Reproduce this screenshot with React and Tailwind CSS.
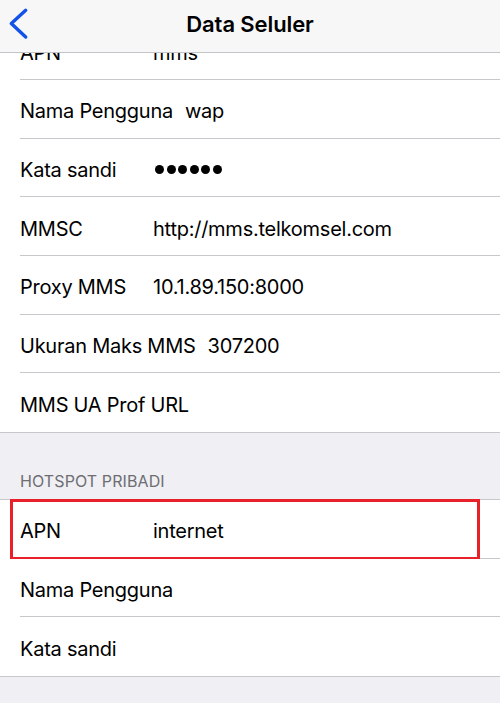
import React from "react";

const font = { fontFamily: "Inter, 'Liberation Sans', sans-serif" };

function Row({ label, value, last, dots, children }) {
  return (
    <div className={`relative bg-white pl-5 ${last ? "border-b border-[#c8c7cc]" : ""}`}>
      <div
        className={`flex h-[58.67px] items-center gap-3 pt-[5px] text-[20px] text-black tracking-[-0.25px] ${
          last ? "" : "border-b border-[#c8c7cc]"
        }`}
      >
        <span className="min-w-[121px] whitespace-nowrap">{label}</span>
        {dots ? (
          <span className="flex items-center gap-[2.5px] pl-[2px]">
            {[0, 1, 2, 3, 4, 5].map((i) => (
              <span key={i} className="h-[9px] w-[9px] rounded-full bg-black" />
            ))}
          </span>
        ) : (
          value && <span className="whitespace-nowrap">{value}</span>
        )}
      </div>
      {children}
    </div>
  );
}

function LastRow({ label }) {
  return (
    <div className="bg-white pl-5">
      <div className="flex h-[58.67px] items-center pt-[5px] text-[20px] tracking-[-0.25px] text-black">
        {label}
      </div>
    </div>
  );
}

export default function App() {
  return (
    <div className="relative h-[703px] w-[500px] overflow-hidden bg-[#efeff4]" style={font}>
      <header className="absolute inset-x-0 top-0 z-10 flex h-[53px] items-center justify-center border-b border-[#c4c4c8] bg-[#f7f7f7]">
        <svg
          className="absolute left-[5px] top-[5px]"
          width="30"
          height="40"
          viewBox="0 0 30 40"
        >
          <path
            d="M20.7 5.3 L6.3 18.5 L20.7 32"
            fill="none"
            stroke="#1352e8"
            strokeWidth="3.4"
            strokeLinecap="round"
            strokeLinejoin="round"
          />
        </svg>
        <h1 className="pb-[4px] text-[22px] font-semibold tracking-[-0.1px] text-black">Data Seluler</h1>
      </header>

      <div className="flex flex-col pt-[21.33px]">
        <div className="border-b border-[#c8c7cc]">
          <Row label="APN" value="mms" />
          <Row label="Nama Pengguna" value="wap" />
          <Row label="Kata sandi" dots />
          <Row label="MMSC" value="http://mms.telkomsel.com" />
          <Row label="Proxy MMS" value="10.1.89.150:8000" />
          <Row label="Ukuran Maks MMS" value="307200" />
          <LastRow label="MMS UA Prof URL" />
        </div>

        <div className="flex h-[66px] items-end px-5 pb-[6px] text-[16px] tracking-[0.1px] text-[#6d6d72]">
          HOTSPOT PRIBADI
        </div>

        <div className="border-t border-[#c8c7cc]">
          <Row label="APN" value="internet">
            <div className="pointer-events-none absolute -top-[1px] bottom-[-1px] left-[10px] right-[20px] border-[3px] border-[#e8202a]" />
          </Row>
          <Row label="Nama Pengguna" />
          <div className="border-b border-[#c8c7cc]">
            <LastRow label="Kata sandi" />
          </div>
        </div>
      </div>
    </div>
  );
}
